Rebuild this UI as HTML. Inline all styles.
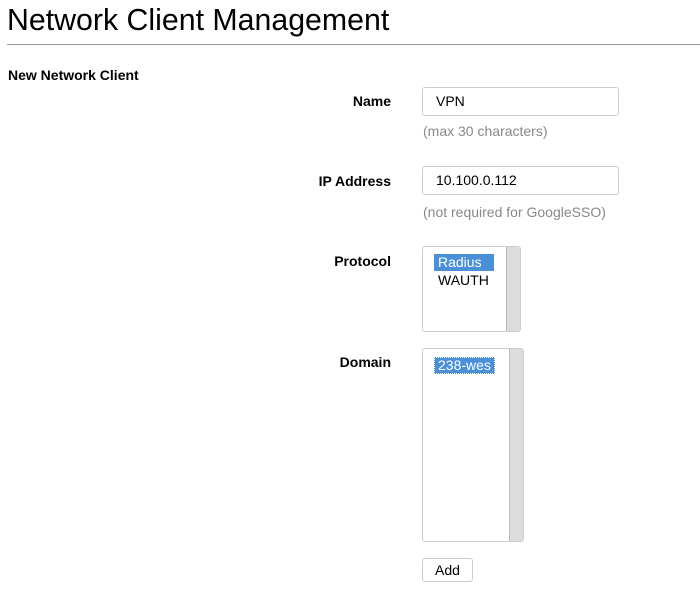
<!DOCTYPE html>
<html><head><meta charset="utf-8"><style>
body{margin:0;width:700px;height:598px;background:#fff;font-family:"Liberation Sans",sans-serif;position:relative;overflow:hidden;color:#000}
div{position:absolute}
.t{left:7px;top:3px;font-size:30.3px;line-height:36px}
.hr{left:7px;top:44px;width:693px;height:1px;background:#999}
.h{left:8px;top:67px;font-size:14px;font-weight:bold}
.l{right:309px;font-size:14px;font-weight:bold;text-align:right}
.in{left:422px;width:195px;height:27px;border:1px solid #ccc;border-radius:3px;font-size:14px;line-height:27px;box-sizing:content-box}
.in span{position:absolute;left:13px}
.help{left:423px;font-size:14px;color:#888}
.sel{left:422px;border:1px solid #ccc;border-radius:3px;box-sizing:border-box;overflow:hidden;font-size:14px}
.sb{top:0;right:0;bottom:0;background:#dcdcdc;border-left:1px solid #bbb}
.opt{left:11px;height:17px;line-height:17px;padding:0 4px}
.btn{left:422px;top:558px;width:49px;height:22px;border:1px solid #ccc;border-radius:3px;font-size:14px;line-height:22px;text-align:center}
</style></head><body>
<div class="t">Network Client Management</div>
<div class="hr"></div>
<div class="h">New Network Client</div>

<div class="l" style="top:93px">Name</div>
<div class="in" style="top:87px"><span>VPN</span></div>
<div class="help" style="top:123px">(max 30 characters)</div>

<div class="l" style="top:173px">IP Address</div>
<div class="in" style="top:166px"><span>10.100.0.112</span></div>
<div class="help" style="top:204px">(not required for GoogleSSO)</div>

<div class="l" style="top:253px">Protocol</div>
<div class="sel" style="top:246px;width:99px;height:86px">
  <div class="sb" style="width:13px"></div>
  <div class="opt" style="top:7px;background:#4a90d9;color:#fff;width:52px">Radius</div>
  <div class="opt" style="top:25px">WAUTH</div>
</div>

<div class="l" style="top:354px">Domain</div>
<div class="sel" style="top:348px;width:102px;height:194px">
  <div class="sb" style="width:13px"></div>
  <div class="opt" style="top:8px;background:#4a90d9;color:#fff;outline:1px dotted #fff;outline-offset:-1px">238-wes</div>
</div>

<div class="btn">Add</div>
</body></html>
